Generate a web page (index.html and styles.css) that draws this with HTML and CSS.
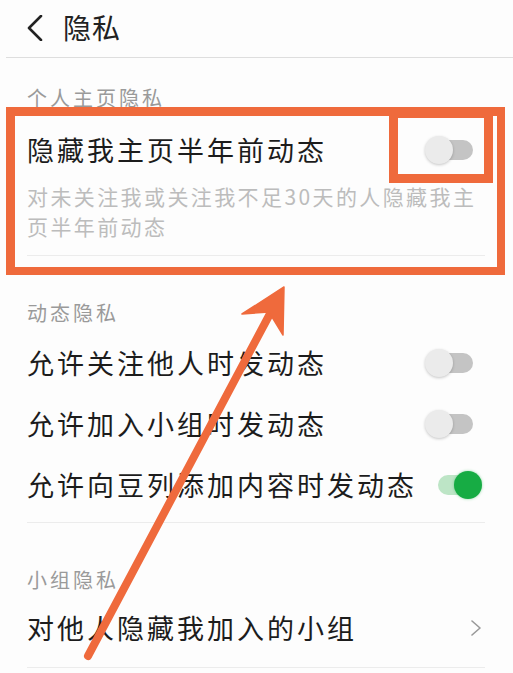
FILE: index.html
```html
<!DOCTYPE html>
<html lang="zh-CN">
<head>
<meta charset="utf-8">
<title>隐私</title>
<link rel="stylesheet" href="styles.css">
</head>
<body>
<div class="page">
  <header class="topbar">
    <svg class="back" width="16" height="26" viewBox="0 0 16 26"><polyline points="14,1 2,13 14,25" fill="none" stroke="#222" stroke-width="2.6" stroke-linecap="round" stroke-linejoin="round"/></svg>
    <h1 class="title">隐私</h1>
  </header>

  <section class="group g1">
    <div class="group-title">个人主页隐私</div>
    <div class="item">
      <div class="row row-main">
        <span class="label">隐藏我主页半年前动态</span>
        <span class="switch"></span>
      </div>
      <p class="desc">对未关注我或关注我不足30天的人隐藏我主页半年前动态</p>
    </div>
    <div class="divider"></div>
  </section>

  <section class="group g2">
    <div class="group-title">动态隐私</div>
    <div class="rows">
      <div class="row"><span class="label">允许关注他人时发动态</span><span class="switch"></span></div>
      <div class="row"><span class="label">允许加入小组时发动态</span><span class="switch"></span></div>
      <div class="row"><span class="label">允许向豆列添加内容时发动态</span><span class="switch on"></span></div>
    </div>
    <div class="divider"></div>
  </section>

  <section class="group g3">
    <div class="group-title">小组隐私</div>
    <div class="rows">
      <div class="row"><span class="label">对他人隐藏我加入的小组</span>
        <svg class="chev" width="12" height="16" viewBox="0 0 12 16"><polyline points="2,1 10,8 2,15" fill="none" stroke="#999" stroke-width="1.6" stroke-linecap="round" stroke-linejoin="round"/></svg>
      </div>
    </div>
    <div class="divider"></div>
  </section>

  <div class="annot annot-big"></div>
  <div class="annot annot-small"></div>
  <svg class="arrow" width="513" height="673" viewBox="0 0 513 673">
    <line x1="272" y1="310" x2="88" y2="656" stroke="#ef6a3c" stroke-width="8" stroke-linecap="round"/>
    <polygon points="284,287 242,314 269,312 283,335" fill="#ef6a3c" stroke="#ef6a3c" stroke-width="1.5" stroke-linejoin="round"/>
  </svg>
</div>
</body>
</html>
```

FILE: styles.css
```css
html, body {
  margin: 0;
  padding: 0;
  background: #fff;
}
body {
  font-family: "Noto Sans CJK SC", "Noto Sans", sans-serif;
  color: #1c1c1c;
}
.page {
  position: relative;
  width: 513px;
  height: 673px;
  overflow: hidden;
  background: #fdfdfd;
}
.topbar {
  height: 57px;
  margin-left: 6px;
  border-bottom: 1px solid #dedede;
  display: flex;
  align-items: center;
  padding-left: 21px;
  box-sizing: content-box;
}
.back {
  flex: none;
  margin-top: -2px;
}
.title {
  margin: -4px 0 0 20px;
  font-size: 28px;
  font-weight: 400;
  letter-spacing: 1px;
  line-height: 36px;
  color: #222;
}
.group-title {
  padding-left: 27px;
  font-size: 20px;
  letter-spacing: 3px;
  line-height: 26px;
  color: #9a9a9a;
}
.g1 { padding-top: 27px; }
.g2, .g3 { padding-top: 44px; }
.item {
  padding-top: 21px;
  padding-bottom: 14px;
}
.row {
  height: 61px;
  display: flex;
  align-items: center;
  justify-content: space-between;
  padding: 0 31px 0 27px;
}
.row-main {
  height: 36px;
}
.label {
  font-size: 27px;
  letter-spacing: 3px;
  line-height: 36px;
  white-space: nowrap;
  color: #1c1c1c;
}
.desc {
  margin: 13px 28px 0 27px;
  font-size: 21px;
  letter-spacing: 2.4px;
  line-height: 30px;
  color: #bcbcbc;
}
.g2 .rows { margin-top: 6px; padding-bottom: 7px; }
.g3 .rows { margin-top: 4px; padding-bottom: 9px; }
.divider {
  height: 1px;
  margin: 0 28px 0 27px;
  background: #ececec;
}
.switch {
  position: relative;
  flex: none;
  width: 57px;
  height: 28px;
}
.switch::before {
  content: "";
  position: absolute;
  left: 7px;
  right: 9px;
  top: 4px;
  height: 20px;
  border-radius: 10px;
  background: #c4c4c4;
}
.switch::after {
  content: "";
  position: absolute;
  left: 0;
  top: 0;
  width: 28px;
  height: 28px;
  border-radius: 50%;
  background: #ebebeb;
  box-shadow: 0 1px 3px rgba(0,0,0,0.22);
}
.switch.on::before {
  left: 13px;
  right: 3px;
  background: #bde5c6;
}
.switch.on::after {
  left: auto;
  right: 0;
  background: #17ac44;
  box-shadow: 0 0 3px rgba(23,172,68,0.45);
}
.chev { flex: none; }
.annot {
  position: absolute;
  box-sizing: border-box;
  border: 9px solid #ef6a3c;
}
.annot-big {
  left: 6px;
  top: 107px;
  width: 499px;
  height: 168px;
  border-bottom-width: 8px;
  border-right-width: 8px;
}
.annot-small {
  left: 389px;
  top: 109px;
  width: 104px;
  height: 74px;
}
.arrow {
  position: absolute;
  left: 0;
  top: 0;
  pointer-events: none;
}
```
